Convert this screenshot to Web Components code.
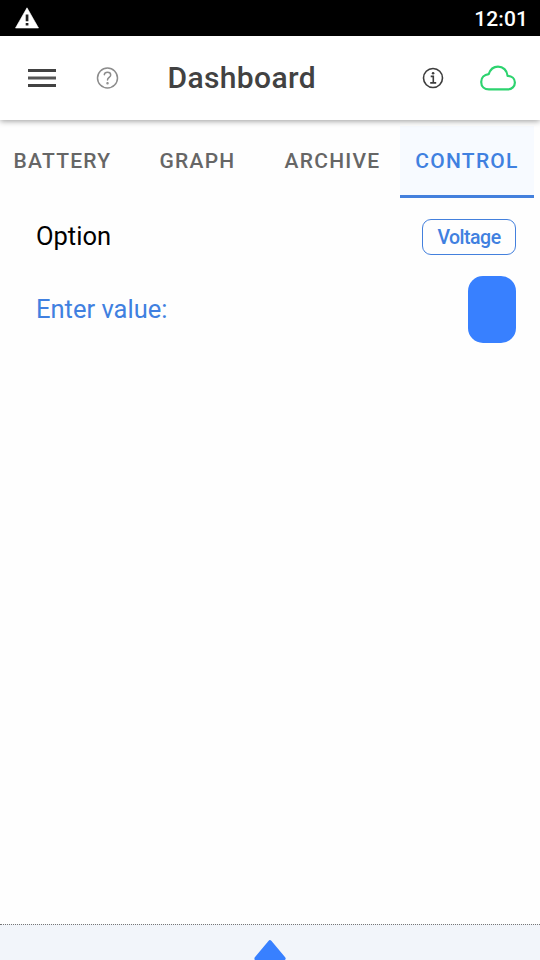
<!DOCTYPE html>
<html lang="en">
<head>
<meta charset="utf-8">
<title>Dashboard</title>
<style>
html,body{margin:0;height:100%;overflow:hidden;background:#fefefe}
body{font-family:Roboto,"Liberation Sans",sans-serif}
</style>
</head>
<body>
<dash-app></dash-app>
<script>
const define = (name, html) => {
  const t = document.createElement('template');
  t.innerHTML = html;
  customElements.define(name, class extends HTMLElement {
    constructor() {
      super();
      this.attachShadow({mode: 'open'}).appendChild(t.content.cloneNode(true));
    }
  });
};

define('status-bar', `<style>
:host{display:flex;justify-content:space-between;align-items:center;box-sizing:border-box;height:36px;background:#000;color:#fff;padding:0 12px 0 15px;flex:none}
svg{display:block}
span{font-weight:500;font-size:21px;line-height:36px;letter-spacing:.1px;padding-top:1px}
</style>
<svg width="24" height="22" viewBox="0 0 24 22"><path d="M12 .8 23.5 21H.5z" fill="#fff" stroke="#fff" stroke-width=".6" stroke-linejoin="round"/><path d="M10.7 7.5h2.7v6.7h-2.7zM10.7 16h2.7v2.6h-2.7z" fill="#222"/></svg>
<span>12:01</span>`);

define('app-header', `<style>
:host{display:flex;align-items:center;box-sizing:border-box;height:84px;background:#fff;padding:0 24px 0 28px;flex:none;position:relative;z-index:2;box-shadow:0 1px 6px rgba(0,0,0,.4)}
svg{display:block;flex:none}
.help{margin-left:40px}
h1{margin:0 auto 0 47.5px;font-weight:500;font-size:30px;line-height:36px;letter-spacing:.375px;color:#424242}
.cloud{margin-left:36px}
</style>
<svg width="28" height="20" viewBox="0 0 28 20"><path d="M0 2.5h28M0 17.5h28" stroke="#424242" stroke-width="3"/><path d="M0 10h28" stroke="#555" stroke-width="3"/></svg>
<svg class="help" width="24" height="24" viewBox="0 0 24 24" fill="none" stroke="#8c8c8c" stroke-width="1.5" stroke-linecap="round"><circle cx="11.5" cy="12" r="10"/><path d="M8.3 8.7C8.5 7 9.8 6.2 11.5 6.2c1.8 0 3.2 1 3.2 2.7 0 2.5-3.2 2.5-3.2 5.2"/><circle cx="11.5" cy="17.3" r=".5" fill="#8c8c8c"/></svg>
<h1>Dashboard</h1>
<svg width="24" height="24" viewBox="0 0 24 24" fill="none" stroke="#3d3d3d" stroke-width="1.6"><circle cx="13" cy="12" r="9.5"/><path d="M10.7 10.4h2.6v6.4M10.2 16.9h6"/><circle cx="13.1" cy="7.2" r="1.3" fill="#3d3d3d" stroke="none"/></svg>
<svg class="cloud" width="36" height="26" viewBox="0 0 36 26" fill="none" stroke="#2dd36f" stroke-width="2.2" stroke-linejoin="round"><path d="M8.7 9.2C10.2 4.5 13.6 1.6 18 1.6c5.1 0 9 3.7 9.6 9.2 4.3.2 7.3 2.8 7.3 6.7 0 3.9-3 6.9-7.3 6.9H9C4.5 24.4 1.2 21.5 1.2 16.9c0-4.3 3.1-7.2 7.5-7.7z"/></svg>`);

define('segment-tab', `<style>
:host{display:flex;align-items:center;justify-content:center;box-sizing:border-box;width:var(--w);height:72px;padding-top:1px;font-weight:500;font-size:21px;line-height:24px;letter-spacing:1.26px;color:#666;flex:none;border-bottom:3px solid transparent}
:host([active]){color:#4080e0;background:#f7faff;border-color:#4380dd}
</style><slot></slot>`);

define('segment-bar', `<style>
:host{display:flex;height:78px;box-sizing:border-box;padding-top:6px;flex:none;overflow:hidden}
</style><slot></slot>`);

define('option-row', `<style>
:host{display:flex;align-items:center;justify-content:space-between;box-sizing:border-box;padding:0 24px 0 36px;font-size:25.5px;line-height:36px;height:var(--h);color:#000;flex:none}
:host([accent]){color:#4080e0}
.label{padding-bottom:2px}
</style><span class="label"><slot></slot></span><slot name="end"></slot>`);

define('outline-button', `<style>
:host{display:flex;align-items:center;justify-content:center;box-sizing:border-box;width:94px;height:36px;padding-top:2px;border:1px solid #4380dd;border-radius:9px;font-weight:500;font-size:19.5px;line-height:24px;letter-spacing:-.5px;color:#4080e0}
</style><slot></slot>`);

define('value-button', `<style>
:host{display:block;width:48px;height:67px;border-radius:15px;background:#3880ff}
</style>`);

define('drawer-handle', `<style>
:host{display:flex;justify-content:center;box-sizing:border-box;height:36px;margin-top:auto;border-top:1px dotted #777;background:#f2f5fa;padding-top:14px;overflow:hidden;flex:none}
svg{display:block;flex:none}
</style>
<svg width="34" height="24" viewBox="0 0 34 24"><path d="M17 3.2 30.6 19.5H3.4z" fill="#3880ff" stroke="#3880ff" stroke-width="4" stroke-linejoin="round"/></svg>`);

define('dash-app', `<style>
:host{display:flex;flex-direction:column;width:540px;height:960px;background:#fefefe}
</style>
<status-bar></status-bar>
<app-header></app-header>
<segment-bar>
<segment-tab style="--w:125px">BATTERY</segment-tab>
<segment-tab style="--w:145px">GRAPH</segment-tab>
<segment-tab style="--w:125px;margin-right:5px">ARCHIVE</segment-tab>
<segment-tab active style="--w:134px">CONTROL</segment-tab>
</segment-bar>
<option-row style="--h:78px">Option<outline-button slot="end">Voltage</outline-button></option-row>
<option-row accent style="--h:67px">Enter value:<value-button slot="end"></value-button></option-row>
<drawer-handle></drawer-handle>`);
</script>
</body>
</html>
